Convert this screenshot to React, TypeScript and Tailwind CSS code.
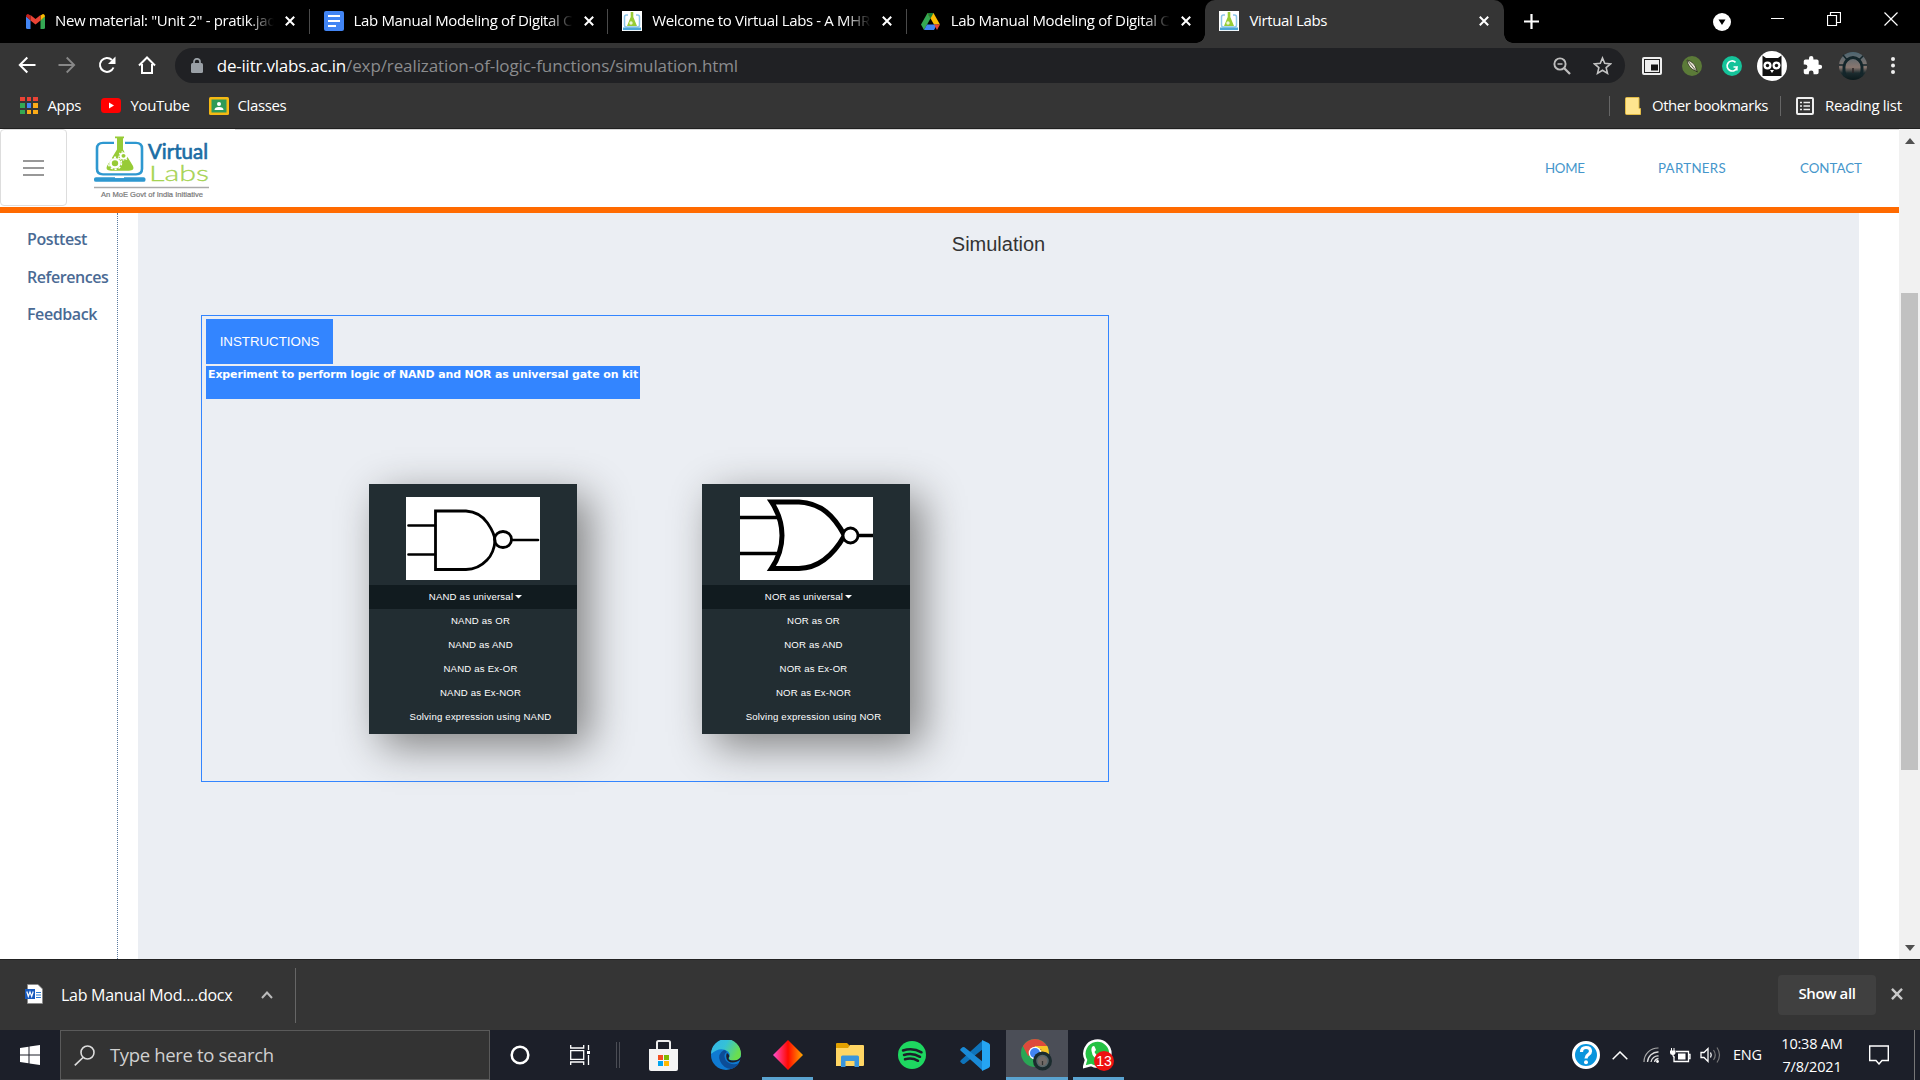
import React from "react";

const UI = "font-['Open_Sans','Noto_Sans',sans-serif]";
const ARIAL = "font-['Liberation_Sans',Arial,sans-serif]";

function Svg({ w, h = w, vb, className = "", children }: { w: number; h?: number; vb?: string; className?: string; children: React.ReactNode }) {
  return (
    <svg width={w} height={h} viewBox={vb ?? `0 0 ${w} ${h}`} fill="none" className={`shrink-0 ${className}`}>
      {children}
    </svg>
  );
}

const Gmail = () => (
  <Svg w={19} h={15} vb="0 0 38 30">
    <path d="M0 5v22a3 3 0 0 0 3 3h6V12z" fill="#4285f4" />
    <path d="M38 5v22a3 3 0 0 1-3 3h-6V12z" fill="#34a853" />
    <path d="M29 3l5-3c2 0 4 2 4 5l-9 8z" fill="#fbbc04" />
    <path d="M9 3L4 0C2 0 0 2 0 5l9 8z" fill="#c5221f" />
    <path d="M9 2l10 8 10-8v11l-10 8-10-8z" fill="#ea4335" />
  </Svg>
);

const Docs = () => (
  <Svg w={20}>
    <rect width="20" height="20" rx="2" fill="#4285f4" />
    <path d="M4 5h12M4 10h12M4 15h8" stroke="#fff" strokeWidth="2.2" />
  </Svg>
);

const LabsFav = () => (
  <Svg w={20}>
    <rect width="20" height="20" fill="#fff" />
    <path d="M6 4H4.500Q2.500 4 2.500 6v8q0 2 2 2h11q2 0 2-2V6q0-2-2-2H14" stroke="#8cc6e8" strokeWidth="1.500" />
    <path d="M8.700 1h2.600v5l3.700 9H5l3.700-9z" fill="#98cc35" />
    <circle cx="9" cy="12" r="1.700" fill="#eaf6d4" />
    <path d="M1 17.800h18" stroke="#4ba6d6" strokeWidth="2.600" />
  </Svg>
);

const Drive = () => (
  <Svg w={19} h={17} vb="0 0 38 34">
    <path d="M13 0L0 23l6 11 13-23z" fill="#34a853" />
    <path d="M13 0h12l13 23H26z" fill="#fbbc04" />
    <path d="M12 23h20l-6 11H6z" fill="#4285f4" />
    <path d="M26 23h12l-6 11z" fill="#ea4335" />
    <path d="M13 0h12l-6 11z" fill="#188038" />
  </Svg>
);

const X = ({ c = "#fff", w = 10, sw = 2 }: { c?: string; w?: number; sw?: number }) => (
  <Svg w={w} vb="0 0 10 10">
    <path d="M.8.8l8.400 8.400M9.200.8L.8 9.200" stroke={c} strokeWidth={sw} />
  </Svg>
);

function Tab({ icon, title, active = false }: { icon: React.ReactNode; title: string; active?: boolean }) {
  return (
    <div className={`flex h-[43px] w-[298.6px] shrink-0 items-center pl-[14px] pr-[15px] pb-px ${active ? "relative rounded-t-[10px] bg-[#353535]" : ""}`}>
      <div className="flex w-5 shrink-0 justify-center">{icon}</div>
      <div className={`-mt-[2px] ml-[10px] w-[219px] shrink-0 overflow-hidden whitespace-nowrap text-[15px] leading-6 tracking-[-0.35px] text-white ${active ? "" : "[mask-image:linear-gradient(90deg,#000_88%,transparent)]"}`}>{title}</div>
      <div className="ml-[11px]"><X /></div>
      {active ? (
        <>
          <div className="absolute -left-[9px] bottom-0 h-[9px] w-[9px] bg-[radial-gradient(circle_at_0_0,transparent_8.500px,#353535_9px)]" />
          <div className="absolute -right-[9px] bottom-0 h-[9px] w-[9px] bg-[radial-gradient(circle_at_100%_0,transparent_8.500px,#353535_9px)]" />
        </>
      ) : null}
    </div>
  );
}

const Sep = () => <div className="-ml-px h-[25px] w-px shrink-0 bg-[#4a4a4a]" />;

function TabStrip() {
  return (
    <div className="flex h-[43px] items-center bg-black">
      <div className="w-[11px] shrink-0" />
      <Tab icon={<Gmail />} title={'New material: "Unit 2" - pratik.jadhav'} />
      <Sep />
      <Tab icon={<Docs />} title="Lab Manual Modeling of Digital Circuits" />
      <Sep />
      <Tab icon={<LabsFav />} title="Welcome to Virtual Labs - A MHRD" />
      <Sep />
      <Tab icon={<Drive />} title="Lab Manual Modeling of Digital Circuits" />
      <Tab icon={<LabsFav />} title="Virtual Labs" active />
      <div className="ml-[20px]">
        <Svg w={15}><path d="M7.500 0v15M0 7.500h15" stroke="#fff" strokeWidth="2.200" /></Svg>
      </div>
      <div className="ml-auto mr-[22px] flex items-center">
        <Svg w={18} className="mr-[40px]"><circle cx="9" cy="9" r="9" fill="#fff" /><path d="M5.500 6.500h7L9 12z" fill="#000" /></Svg>
        <Svg w={14} className="mr-[42px] -mt-[5px]"><path d="M0 6.500h13" stroke="#fff" /></Svg>
        <Svg w={14} className="mr-[43px] -mt-[6px]"><path d="M.5 3.500h9v10h-9zM3.500 3.500v-3h10v10h-4" stroke="#fff" strokeWidth="1.200" /></Svg>
        <Svg w={14} className="-mt-[6px]"><path d="M.5.5l13 13M13.500.5l-13 13" stroke="#fff" strokeWidth="1.200" /></Svg>
      </div>
    </div>
  );
}

const Cell = ({ children }: { children: React.ReactNode }) => <div className="flex w-[40.2px] shrink-0 justify-center">{children}</div>;

function Toolbar() {
  return (
    <div className="flex h-[45px] items-center bg-[#353535] pl-[7px]">
      <Cell><Svg w={18} className="-mt-[2px]"><path d="M17.500 9H2M9.300 1.500L1.800 9l7.500 7.500" stroke="#fff" strokeWidth="2" /></Svg></Cell>
      <Cell><Svg w={18} className="-mt-[2px]"><path d="M.5 9H16M8.700 1.500L16.200 9l-7.500 7.500" stroke="#888" strokeWidth="1.800" /></Svg></Cell>
      <Cell><Svg w={18} className="-mt-[2px]"><path d="M15.500 11.500A7 7 0 1 1 14 4" stroke="#fff" strokeWidth="2" /><path d="M17.500.5v7.500H10z" fill="#fff" /></Svg></Cell>
      <Cell><Svg w={18} className="-mt-[2px] -ml-px"><path d="M1 9.500L9 1.500l8 8M4 8v9h10V8" stroke="#fff" strokeWidth="2" /></Svg></Cell>
      <div className="ml-[7px] flex h-[35px] w-[1450px] shrink-0 items-center rounded-full bg-[#202124]">
        <Svg w={12} h={15} className="ml-[16px]"><rect y="5" width="12" height="10" rx="1.500" fill="#9aa0a6" /><path d="M3 6V3.800a3 3 0 0 1 6 0V6" stroke="#9aa0a6" strokeWidth="1.700" /></Svg>
        <div className="ml-[14px] whitespace-nowrap text-[17px] leading-6 tracking-[-0.1px] text-[#8b8c8e]"><span className="tracking-[-0.22px] text-white">de-iitr.vlabs.ac.in</span>/exp/realization-of-logic-functions/simulation.html</div>
        <div className="ml-auto mr-[13px] flex items-center gap-[22px]">
          <Svg w={18}><circle cx="7" cy="7" r="5.600" stroke="#bdbdbd" strokeWidth="1.900" /><path d="M11 11l6 6" stroke="#bdbdbd" strokeWidth="2.300" /><path d="M4.500 7h5" stroke="#bdbdbd" strokeWidth="1.500" /></Svg>
          <Svg w={19} vb="0 0 24 24"><path d="M12 2.500l2.800 6.800 7.400.6-5.600 4.800 1.700 7.200L12 18l-6.300 3.900 1.700-7.200L1.800 9.900l7.400-.6z" stroke="#c4c4c4" strokeWidth="2" /></Svg>
        </div>
      </div>
      <div className="ml-[7px] flex items-center">
        <Cell><Svg w={20} h={18}><rect width="20" height="18" rx="2" fill="#eee" /><rect x="2.500" y="2.500" width="15" height="13" stroke="#222" /><rect x="9" y="7.500" width="7" height="6" fill="#111" /></Svg></Cell>
        <Cell><Svg w={20}><circle cx="10" cy="10" r="10" fill="#5b7a38" /><path d="M5 4q8 2 9.500 10l1 2-2-1Q6 12 5 4z" fill="#e9e4d4" stroke="#2a2f1c" strokeWidth=".8" /><path d="M6 5l9 11" stroke="#2a2f1c" strokeWidth=".7" /></Svg></Cell>
        <Cell><Svg w={20}><circle cx="10" cy="10" r="10" fill="#15c39a" /><path d="M13.500 6.300A5 5 0 1 0 15 11h-3.500M14.800 11v3.500" stroke="#fff" strokeWidth="1.700" /></Svg></Cell>
        <Cell><Svg w={30}><circle cx="15" cy="15" r="15" fill="#fff" /><path d="M5.500 4.500L9 7h12l3.500-2.500V25h-19z" fill="#111" /><circle cx="10.500" cy="14.500" r="4" fill="#fff" /><circle cx="19.500" cy="14.500" r="4" fill="#fff" /><circle cx="10.500" cy="14.500" r="1.700" fill="#111" /><circle cx="19.500" cy="14.500" r="1.700" fill="#111" /><path d="M13 19h4l-2 3z" fill="#fff" /></Svg></Cell>
        <Cell><Svg w={21} vb="0 0 24 24"><path d="M20.500 11H19V7a2 2 0 0 0-2-2h-4V3.500a2.500 2.500 0 0 0-5 0V5H4a2 2 0 0 0-2 2v3.800h1.500a2.700 2.700 0 0 1 0 5.400H2V20a2 2 0 0 0 2 2h3.800v-1.500a2.700 2.700 0 0 1 5.400 0V22H17a2 2 0 0 0 2-2v-4h1.500a2.500 2.500 0 0 0 0-5z" fill="#fff" /></Svg></Cell>
        <Cell>
          <Svg w={28}>
            <defs><linearGradient id="av" x1="0" y1="0" x2="0" y2="1"><stop offset="0" stopColor="#4b6470" /><stop offset=".55" stopColor="#88766f" /><stop offset=".75" stopColor="#1c2c2f" /><stop offset="1" stopColor="#0b191b" /></linearGradient></defs>
            <circle cx="14" cy="14" r="14" fill="url(#av)" />
            <path d="M6 24Q3 13 8 8q6-5 12 0 5 5 2 16" stroke="#14262b" strokeWidth="3" /><path d="M4 3l5 6M24 4l-5 5M0 13h6M28 13h-6" stroke="#14262b" strokeWidth="1.500" />
            <path d="M14 16v5" stroke="#2b2526" strokeWidth="1.500" />
          </Svg>
        </Cell>
        <Cell><Svg w={4} h={17}><circle cx="2" cy="2" r="2" fill="#eee" /><circle cx="2" cy="8.500" r="2" fill="#eee" /><circle cx="2" cy="15" r="2" fill="#eee" /></Svg></Cell>
      </div>
    </div>
  );
}

function Bookmarks() {
  const dots = ["#ea4335", "#ea4335", "#ea4335", "#34a853", "#4285f4", "#fbab18", "#34a853", "#fbab18", "#fbab18"];
  return (
    <div className="flex h-[40px] items-center whitespace-nowrap bg-[#353535] pb-[5px] pl-[20px] text-[15px] leading-5 tracking-[-0.39px] text-white">
      <div className="grid grid-cols-3 gap-[2px]">
        {dots.map((c, i) => <div key={i} className="h-[4.500px] w-[4.500px]" style={{ backgroundColor: c }} />)}
      </div>
      <div className="-mt-[2px] ml-[10px] w-[53px]">Apps</div>
      <Svg w={20} h={15}><rect width="20" height="15" rx="3.500" fill="#f00" /><path d="M8 4.500v6l5-3z" fill="#fff" /></Svg>
      <div className="-mt-[2px] ml-[10px] w-[78px]">YouTube</div>
      <Svg w={20} h={18}><rect width="20" height="18" rx="1.500" fill="#f6b913" /><rect x="2.500" y="2.500" width="15" height="13" fill="#2f9a58" /><circle cx="10" cy="7" r="2" fill="#fff" /><path d="M5.500 13q0-3 4.500-3t4.500 3z" fill="#fff" /></Svg>
      <div className="-mt-[2px] ml-[9px]">Classes</div>
      <div className="ml-auto flex items-center">
        <div className="h-5 w-px bg-[#666]" />
        <Svg w={16} h={18} className="ml-[15px]"><path d="M.5 1.500q0-1 1-1H14v11h1.500v6H1.500q-1 0-1-1z" fill="#ffe58f" stroke="#e2bb45" /></Svg>
        <div className="-mt-[2px] ml-[11px] w-[128px] tracking-[-0.48px]">Other bookmarks</div>
        <div className="h-5 w-px bg-[#666]" />
        <Svg w={18} h={18} className="ml-[15px]"><rect x="1" y="1" width="16" height="16" rx="1" stroke="#eee" strokeWidth="2" /><path d="M4 5.500h2M4 9h2M4 12.500h2M7.500 5.500H14M7.500 9H14M7.500 12.500H14" stroke="#eee" strokeWidth="1.600" /></Svg>
        <div className="-mt-[2px] ml-[11px] w-[95px] tracking-[-0.3px]">Reading list</div>
      </div>
    </div>
  );
}

const Logo = () => (
  <Svg w={116} h={64}>
    <g transform="translate(0 .5) scale(1 .925)">
      <path d="M20 8H9q-6 0-6 6v22q0 6 6 6h33q6 0 6-6V14q0-6-6-6H31" stroke="#2e98d0" strokeWidth="2.600" />
      <path d="M21 1h9v2h-1v12l10 18q2 5-4 5H17q-6 0-4-5l10-18V3h-2z" fill="#97cb36" />
      <circle cx="21" cy="30" r="4.500" stroke="#fff" strokeWidth="2.600" />
      <circle cx="21" cy="30" r="6.500" stroke="#fff" strokeWidth="1.500" strokeDasharray="2.200 1.900" />
      <circle cx="29.500" cy="22" r="3" stroke="#fff" strokeWidth="2" />
      <circle cx="29.500" cy="22" r="4.500" stroke="#fff" strokeWidth="1.200" strokeDasharray="1.600 1.500" />
      <rect y="45" width="51.500" height="5" rx="2" fill="#2e98d0" /><rect x="21" y="44" width="9" height="2" fill="#fff" />
    </g>
    <path d="M0 52.500h115" stroke="#aaa" strokeWidth="1.400" />
    <text x="54" y="24" fontFamily="Lato, sans-serif" fontSize="21.500" fill="#1b6da4" stroke="#1b6da4" strokeWidth=".7" textLength="60" lengthAdjust="spacingAndGlyphs">Virtual</text>
    <text x="55" y="46" fontFamily="Lato, sans-serif" fontSize="22" fontWeight="300" fill="#a6d352" stroke="#a6d352" strokeWidth=".3" textLength="60" lengthAdjust="spacingAndGlyphs">Labs</text>
    <text x="7" y="61.500" fontFamily="Liberation Sans, sans-serif" fontSize="8" fill="#777" stroke="#777" strokeWidth=".2" textLength="102" lengthAdjust="spacingAndGlyphs">An MoE Govt of India Initiative</text>
  </Svg>
);

function Header() {
  return (
    <div className="flex h-[84px] shrink-0 border-b-[6px] border-[#ff6a00] bg-white">
      <div className="flex h-[77px] w-[67px] items-center justify-center rounded-[4px] border border-[#ddd]">
        <Svg w={21} h={16}><path d="M0 1h21M0 8h21M0 15h21" stroke="#777" strokeWidth="1.500" /></Svg>
      </div>
      <div className="ml-[27px] mt-[6px]"><Logo /></div>
      <div className="ml-[25px] flex flex-1 items-center justify-end whitespace-nowrap border-t border-[#d8d8d8] pt-px font-['Lato',sans-serif] text-[13.300px] text-[#4596cb]">
        <div className="w-[113px] tracking-[-0.3px]">HOME</div>
        <div className="w-[142px] tracking-[0.3px]">PARTNERS</div>
        <div className="w-[99px]">CONTACT</div>
      </div>
    </div>
  );
}

const NandGate = () => (
  <Svg w={134} h={83}>
    <rect width="134" height="83" fill="#fff" />
    <path d="M2.500 28.500H29M2.500 57.500H29M106 43h26" stroke="#000" strokeWidth="2.700" strokeLinecap="round" />
    <path d="M29.500 14H60q14 1 21.500 12Q89 37 89 44q-1 12-8 19-9 9.500-21 9.500H29.500z" stroke="#000" strokeWidth="2.800" />
    <ellipse cx="97" cy="42.500" rx="8.500" ry="8" stroke="#000" strokeWidth="2.800" />
  </Svg>
);

const NorGate = () => (
  <Svg w={133} h={83}>
    <rect width="133" height="83" fill="#fff" />
    <path d="M0 20.500h38M0 56.500h38M118 38.500h15" stroke="#000" strokeWidth="3.400" />
    <path d="M31.500 5H59c22 1 35 14 45.500 33.500C94 57 80 71 59 71.500H31.500Q42 56 42 38.500T31.500 5z" stroke="#000" strokeWidth="5" />
    <circle cx="110.500" cy="38.500" r="7.500" fill="#fff" stroke="#000" strokeWidth="2.800" />
  </Svg>
);

function Card({ g, gate }: { g: string; gate: React.ReactNode }) {
  const rows = [`${g} as OR`, `${g} as AND`, `${g} as Ex-OR`, `${g} as Ex-NOR`, `Solving expression using ${g}`];
  return (
    <div className={`h-[250px] w-[208px] bg-[#222d32] text-center text-[9.600px] leading-6 tracking-[0.2px] text-white shadow-[12px_12px_40px_0_#808080] ${ARIAL}`}>
      <div className="flex h-[101px] justify-center pt-[13px]">{gate}</div>
      <div className="flex h-6 items-center justify-center bg-[#111b1f] pl-[5px]">
        {g} as universal
        <Svg w={7} h={4} className="ml-[2px]"><path d="M0 0h7L3.500 3.500z" fill="#fff" /></Svg>
      </div>
      {rows.map((r) => <div key={r} className="h-6 whitespace-nowrap pl-[15px]">{r}</div>)}
    </div>
  );
}

function Page() {
  return (
    <div className="flex h-[830px] bg-white">
      <div className="flex w-[1899px] shrink-0 flex-col">
        <Header />
        <div className="flex flex-1">
          <div className={`flex w-[118px] flex-col border-r border-dotted border-[#5b7a9f] pl-[27px] pt-[14px] text-[16px] font-semibold tracking-[-0.42px] text-[#4a6a94] ${UI}`}>
            <div className="h-[37.5px] leading-6">Posttest</div>
            <div className="h-[37.5px] leading-6">References</div>
            <div className="h-[37.5px] leading-6">Feedback</div>
          </div>
          <div className={`ml-5 flex w-[1721px] flex-col bg-[#ebeef3] ${ARIAL}`}>
            <div className="mt-[16px] text-center text-[20px] leading-[30px] text-[#333]">Simulation</div>
            <div className="ml-[63px] mt-[56px] flex h-[467px] w-[908px] flex-col border border-[#3385ff] pl-[4px] pt-[3px]">
              <div className="flex h-[45px] w-[127px] items-center justify-center bg-[#3385ff] text-[13.300px] text-white">INSTRUCTIONS</div>
              <div className="mt-[2px] h-[33px] w-[434px] whitespace-nowrap bg-[#3385ff] pl-[2px] font-['DejaVu_Sans',sans-serif] text-[11px] font-bold leading-[17px] tracking-[-0.13px] text-white">Experiment to perform logic of NAND and NOR as universal gate on kit</div>
              <div className="ml-[163px] mt-[85px] flex gap-[125px]">
                <Card g="NAND" gate={<NandGate />} />
                <Card g="NOR" gate={<NorGate />} />
              </div>
            </div>
          </div>
        </div>
      </div>
      <div className="flex w-[21px] flex-col items-center justify-between bg-[#f1f1f1] pb-[8px] pt-[9px]">
        <Svg w={10} h={6}><path d="M0 6h10L5 0z" fill="#505050" /></Svg>
        <div className="mb-[175px] mt-[149px] w-[17px] flex-1 bg-[#c1c1c1]" />
        <Svg w={10} h={6}><path d="M0 0h10L5 6z" fill="#505050" /></Svg>
      </div>
    </div>
  );
}

function Downloads() {
  return (
    <div className="flex h-[71px] items-center whitespace-nowrap border-t border-[#222] bg-[#353535] text-white">
      <Svg w={18} h={20} className="ml-[25px] -mt-[2px]">
        <path d="M2.500.5H13l4.500 4.500v14.500h-15z" fill="#fff" stroke="#888" strokeWidth=".8" /><path d="M11 8.500h5M11 11h5M11 13.500h5" stroke="#2b7cd3" strokeWidth="1.200" />
        <rect y="5" width="10" height="10" fill="#185abd" /><path d="M1.800 7.500l1.500 5L5 8l1.700 4.500 1.500-5" stroke="#fff" strokeWidth="1.200" />
      </Svg>
      <div className="ml-[18px] w-[199.5px] text-[16px] tracking-[-0.27px]">Lab Manual Mod....docx</div>
      <Svg w={12} h={8} className="-mt-px"><path d="M1 7l5-5.500L11 7" stroke="#bbb" strokeWidth="2" /></Svg>
      <div className="ml-[22.5px] h-[55px] w-px bg-[#666]" />
      <div className="ml-auto mr-[15px] flex h-10 w-[98px] items-center justify-center rounded-[4px] bg-[#404040] pb-[3px] text-[15px] font-semibold tracking-[-0.38px]">Show all</div>
      <div className="-mt-[2px] mr-[17px]"><X c="#c8c8c8" w={12} sw={2} /></div>
    </div>
  );
}

const Task = ({ children, bg = "", bar = "" }: { children: React.ReactNode; bg?: string; bar?: string }) => (
  <div className={`flex h-[50px] w-[62.2px] shrink-0 flex-col items-center ${bg}`}>
    <div className="flex h-[47px] items-center pt-[3px]">{children}</div>
    <div className={`h-[3px] ${bar}`} />
  </div>
);

function Taskbar() {
  return (
    <div className="flex h-[50px] items-center whitespace-nowrap bg-[#1c1f29] text-white">
      <Svg w={20} className="ml-5"><path d="M0 3l8.500-1.200v7.700H0zM9.500 1.600L20 0v9.500H9.500zM0 10.500h8.500v7.700L0 17zM9.500 10.500H20V20L9.500 18.400z" fill="#fff" /></Svg>
      <div className="ml-5 flex h-[50px] w-[430px] shrink-0 items-center border border-[#5a5a5a] bg-[#333]">
        <Svg w={21} className="ml-[13px]"><circle cx="13.500" cy="7.500" r="6.500" stroke="#ddd" strokeWidth="1.600" /><path d="M9 12.500L.8 20.300" stroke="#ddd" strokeWidth="1.700" /></Svg>
        <div className="ml-[15px] text-[18.500px] tracking-[-0.34px] text-[#d0d0d0]">Type here to search</div>
      </div>
      <Svg w={20} className="ml-[20px]"><circle cx="10" cy="10" r="8.300" stroke="#fff" strokeWidth="2.500" /></Svg>
      <Svg w={21} h={20} className="ml-[40px]"><path d="M.7 0v3h13V0M.7 20v-3h13v3M.7 5.700h13v8.600H.7zM18.500 0v5M18.500 10v10" stroke="#fff" strokeWidth="1.300" /><rect x="17" y="6" width="3" height="3" fill="#fff" /></Svg>
      <div className="ml-[25px] h-[26px] w-[4px] border-x border-[#4b4d55]" />
      <div className="ml-[12.5px] flex">
        <Task><Svg w={29} h={31}><path d="M8 9V2.500Q8 1 9.500 1h10Q21 1 21 2.500V9" stroke="#eee" strokeWidth="2" /><path d="M0 9h29v20q0 2-2 2H2q-2 0-2-2z" fill="#f4f4f4" /><path d="M9 15h5v5H9z" fill="#f25022" /><path d="M15 15h5v5h-5z" fill="#7fba00" /><path d="M9 21h5v5H9z" fill="#00a4ef" /><path d="M15 21h5v5h-5z" fill="#ffb900" /></Svg></Task>
        <Task>
          <Svg w={30} vb="0 0 30 30">
            <defs><linearGradient id="eg" x1="0" y1="0" x2="1" y2=".4"><stop stopColor="#34b3e8" /><stop offset=".5" stopColor="#35c1d8" /><stop offset="1" stopColor="#6ade4e" /></linearGradient></defs>
            <circle cx="15" cy="15" r="15" fill="#0f7ad1" />
            <path d="M0 14A15 15 0 0 1 30 14q0 6-7 6.500-6 0-5-3 2-3-1-6Q9 6 0 14z" fill="url(#eg)" />
            <path d="M13 10Q6 14 9 21q3 7 11 8 6-2 8-6-5 2.500-10 0-5-3-4.500-8 .5-2 2.500-3-1.500-2-3-2z" fill="#0c4d97" />
            <path d="M30.500 19Q22 25 17 21q-3-4-1-8 3 2 2 4-2 3.500 5 3.500 4 0 7-3.500z" fill="#1c1f29" />
          </Svg>
        </Task>
        <Task bar="w-[51px] bg-[#5aa3d0]">
          <Svg w={30}><defs><linearGradient id="dm"><stop stopColor="#ff4fd0" /><stop offset=".5" stopColor="#ff0a00" /><stop offset="1" stopColor="#ffa800" /></linearGradient></defs><path d="M15 0l15 15-15 15L0 15z" fill="url(#dm)" /></Svg>
        </Task>
        <Task><Svg w={28} h={24}><path d="M0 1q0-1 1-1h10l3 3-2 3H0z" fill="#e2a100" /><path d="M0 5h12l2-3h13q1 0 1 1v19q0 1-1 1H0z" fill="#ffd664" /><path d="M5 24V14q0-1.500 1.500-1.500h15Q23 12.500 23 14v10h-4.500v-6h-9v6z" fill="#3b96dc" /></Svg></Task>
        <Task><Svg w={28}><circle cx="14" cy="14" r="14" fill="#1ed760" /><path d="M5 9.500q10-3 18.500 1.800M6 14q8.500-2.500 16 1.800M7 18.300q7-2 13 1.500" stroke="#1c1f29" strokeWidth="2.500" strokeLinecap="round" /></Svg></Task>
        <Task><Svg w={30} h={31}><path d="M22 1L1 20q-1.500 1.500 0 2.500l1.500 1.200q1 .7 2 0L23 9z" fill="#0e73ba" /><path d="M22 30L1 11q-1.500-1.500 0-2.500l1.500-1.200q1-.7 2 0L23 22z" fill="#1a8ad6" /><path d="M22 0l6.500 3q1.500.8 1.500 2v21q0 1.200-1.500 2L22 31z" fill="#25a5f2" /></Svg></Task>
        <Task bg="bg-[#4b4e57]" bar="w-full bg-[#5aa3d0]">
          <Svg w={31} h={32}>
            <circle cx="14" cy="14" r="14" fill="#2aa655" /><path d="M14 14L1.900 7A14 14 0 0 1 26.100 7z" fill="#de4a3c" /><path d="M14 14l12.100-7A14 14 0 0 1 14 28z" fill="#f8c527" />
            <path d="M1.900 7H14v7l-7 3z" fill="#de4a3c" /><path d="M14 7h12.100L27 10H14z" fill="#f8c527" />
            <circle cx="14" cy="14" r="6.300" fill="#fff" /><circle cx="14" cy="14" r="5" fill="#4285f4" />
            <circle cx="21.500" cy="22" r="9.500" fill="#1b2b2e" /><circle cx="21.500" cy="22" r="5.500" fill="#716b68" stroke="#56666b" strokeWidth="1.500" /><path d="M21.500 22v4" stroke="#333" strokeWidth="1.300" />
          </Svg>
        </Task>
        <Task bar="w-[51px] bg-[#5aa3d0]">
          <Svg w={31} h={32}>
            <path d="M1 28l2-7A13 13 0 1 1 8 26z" fill="#25c244" stroke="#fff" strokeWidth="2.500" />
            <path d="M9 8q2-2 3 .5l1 2.500-1.500 2q2 4 5.500 5l2-2 3 1.500q0 4-4 4Q9.500 20 8.500 12 8 10 9 8z" fill="#fff" />
            <circle cx="21" cy="22" r="10" fill="#ee1111" />
            <text x="21" y="27" fontSize="14" textAnchor="middle" fill="#fff" fontFamily="Liberation Sans, sans-serif">13</text>
          </Svg>
        </Task>
      </div>
      <div className="ml-auto flex items-center">
        <Svg w={28}><circle cx="14" cy="14" r="12.500" fill="#0a95dd" stroke="#fff" strokeWidth="3" /><path d="M9.500 11q0-4.500 4.500-4.500t4.500 3.800q0 2-2.200 3.300T14 17.500" stroke="#fff" strokeWidth="3.200" /><circle cx="14" cy="21.300" r="2" fill="#fff" /></Svg>
        <Svg w={16} h={9} className="ml-[12px]"><path d="M.7 8.300L8 1l7.300 7.300" stroke="#fff" strokeWidth="1.500" /></Svg>
        <Svg w={16} className="ml-[15px]"><path d="M1 15A14 14 0 0 1 15.500 1" stroke="#aaa" strokeWidth="1.200" /><path d="M4.500 15A10.500 10.500 0 0 1 15.500 5M8 15a7 7 0 0 1 7.500-6M11.500 15q.5-3 4-3.500" stroke="#ddd" strokeWidth="1.300" /><circle cx="14.500" cy="14.500" r="1.400" fill="#fff" /></Svg>
        <Svg w={21} h={15} className="ml-[11px]"><path d="M6 3.500h12.500v10H4V9M18.500 6.500H20v4h-1.500" stroke="#fff" strokeWidth="1.300" /><rect x="8" y="5.500" width="7.500" height="6" fill="#fff" /><path d="M1.500 0v3M4 0v3" stroke="#fff" /><path d="M0 2.500h5.500V5Q5.500 7 2.800 7T0 5z" fill="#fff" /><path d="M2.800 6q0 3 2 3" stroke="#fff" strokeWidth="1.200" /></Svg>
        <Svg w={21} h={18} className="ml-[9px]"><path d="M1 6.500h3l4-4v13l-4-4H1z" stroke="#fff" strokeWidth="1.300" /><path d="M10.500 6.500q1.500 2.500 0 5" stroke="#fff" strokeWidth="1.300" /><path d="M13.500 4q3.500 5 0 10M17 1.500q5 7.500 0 15" stroke="#777" strokeWidth="1.200" /></Svg>
        <div className="ml-[12px] w-[47px] text-[14.500px] tracking-[-0.2px]">ENG</div>
        <div className="w-[64px] text-center text-[14.500px] leading-[23px] tracking-[-0.15px]"><div className="tracking-[-0.2px]">10:38 AM</div><div>7/8/2021</div></div>
        <Svg w={20} h={20} className="ml-[25px]"><path d="M.7 1h18.600v14.500H13L10 19l-3-3.500H.7z" stroke="#fff" strokeWidth="1.400" /></Svg>
        <div className="ml-[25px] mr-[5px] h-[50px] w-px bg-[#777]" />
      </div>
    </div>
  );
}

export default function App() {
  return (
    <div className={`flex h-[1080px] w-[1920px] flex-col overflow-hidden bg-white ${UI}`}>
      <TabStrip />
      <Toolbar />
      <Bookmarks />
      <div className="h-px bg-[#202020]" />
      <Page />
      <Downloads />
      <Taskbar />
    </div>
  );
}
